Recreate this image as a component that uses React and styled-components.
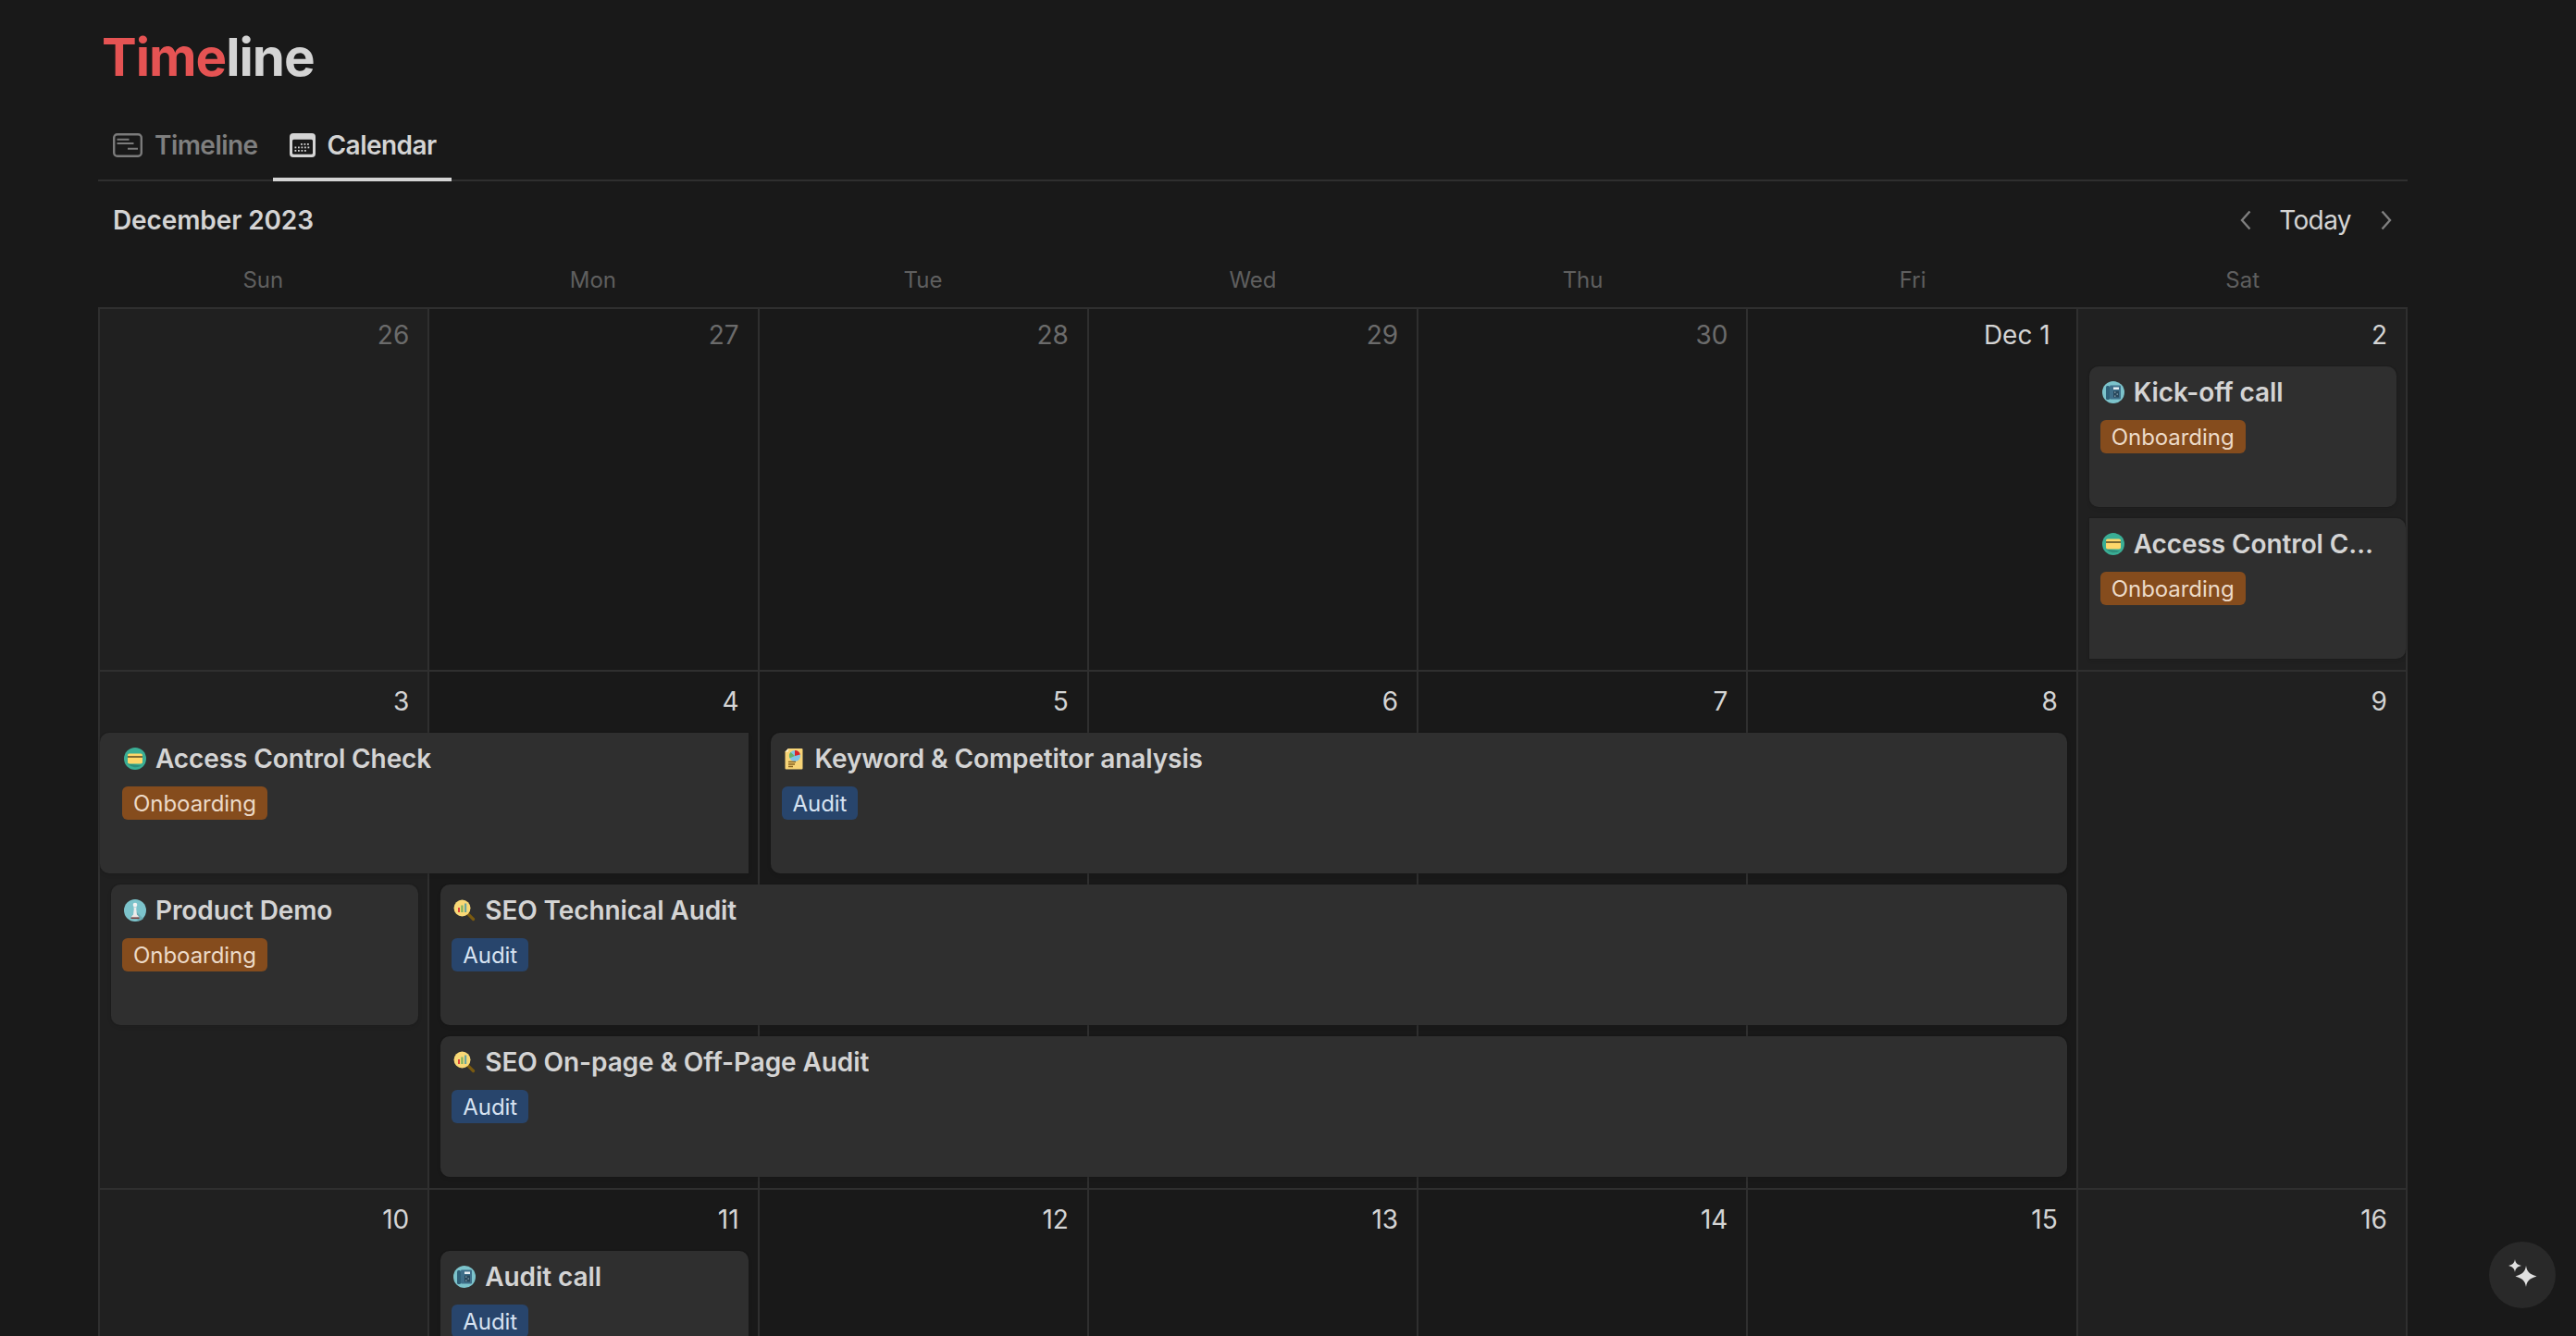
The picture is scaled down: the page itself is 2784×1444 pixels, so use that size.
import React from "react";
import styled, { createGlobalStyle } from "styled-components";

const Global = createGlobalStyle`
  html, body { margin: 0; padding: 0; background: #191919; height: 100%; overflow: hidden; }
  body { font-family: Inter, "Noto Sans", "Liberation Sans", sans-serif; color: #d4d4d4; -webkit-font-smoothing: antialiased; }
`;

const Page = styled.div`
  width: 2496px;
  margin-left: 106px;
  height: 1444px;
  overflow: hidden;
`;
const Title = styled.h1`
  margin: 0;
  padding: 26px 0 0 4px;
  height: 112px;
  box-sizing: border-box;
  font-size: 56.5px;
  line-height: 72px;
  font-weight: 700;
  letter-spacing: -1px;
  color: #d4d4d4;
`;
const TitleAccent = styled.span`
  color: #e55353;
`;
const TabBar = styled.nav`
  display: flex;
  height: 84px;
  box-sizing: border-box;
  border-bottom: 2px solid #2f2f2f;
`;
const Tab = styled.div`
  display: flex;
  align-items: center;
  gap: 13px;
  height: 84px;
  box-sizing: border-box;
  padding: 9px ${(p) => (p.$active ? "16px" : "16px")} 0 ${(p) => (p.$active ? "18px" : "16px")};
  font-size: 28px;
  font-weight: 600;
  letter-spacing: -0.55px;
  color: ${(p) => (p.$active ? "#d4d4d4" : "#7f7f7f")};
  border-bottom: 4px solid ${(p) => (p.$active ? "#d4d4d4" : "transparent")};
`;
const MonthBar = styled.div`
  display: flex;
  align-items: center;
  justify-content: space-between;
  height: 84px;
  padding: 0 16px 0 16px;
  box-sizing: border-box;
`;
const MonthLabel = styled.div`
  font-size: 28px;
  font-weight: 600;
  letter-spacing: -0.1px;
  color: #d4d4d4;
`;
const Nav = styled.div`
  display: flex;
  align-items: center;
`;
const NavButton = styled.div`
  display: flex;
  width: 14px;
  justify-content: center;
`;
const TodayLabel = styled.div`
  font-size: 28px;
  font-weight: 400;
  letter-spacing: -0.6px;
  color: #d4d4d4;
  margin: 0 31px 0 29px;
`;
const WeekdayRow = styled.div`
  display: grid;
  grid-template-columns: repeat(7, 1fr);
  height: 52px;
`;
const Weekday = styled.div`
  text-align: center;
  font-size: 24px;
  line-height: 46px;
  color: #5f5f5f;
`;
const Week = styled.section`
  display: grid;
  grid-template-columns: repeat(7, 1fr);
  grid-template-rows: ${(p) => p.$head}px repeat(${(p) => p.$rows}, 152px) 0;
  row-gap: 12px;
  border-top: 2px solid #2f2f2f;
  border-right: 2px solid #2f2f2f;
`;
const Day = styled.div`
  grid-row: 1 / -1;
  grid-column: ${(p) => p.$col};
  box-sizing: border-box;
  padding: ${(p) => p.$pad}px ${(p) => (p.$monthStart ? "28px" : "20px")} 0 0;
  text-align: right;
  font-size: 28px;
  line-height: 36px;
  color: ${(p) => (p.$muted ? "#6b6b6b" : "#d4d4d4")};
  background: ${(p) => (p.$col === 1 || p.$col === 7 ? "#202020" : "#191919")};
  border-left: 2px solid #2f2f2f;
`;
const Card = styled.article`
  grid-column: ${(p) => p.$col} / span ${(p) => p.$span};
  grid-row: ${(p) => p.$row + 1};
  min-width: 0;
  box-sizing: border-box;
  margin-left: ${(p) => (p.$flushLeft ? "2px" : "14px")};
  margin-right: ${(p) => (p.$flushRight ? "0" : "10px")};
  padding: 8px ${(p) => (p.$flushRight ? "26px" : "12px")} 0 ${(p) => (p.$flushLeft ? "24px" : "12px")};
  background: #2f2f2f;
  border-radius: ${(p) => (p.$flushRight ? "0 10px 10px 0" : p.$flushLeft ? "10px 0 0 10px" : "10px")};
  box-shadow: 0 0 0 1px rgba(15, 15, 15, 0.1), 0 2px 4px rgba(15, 15, 15, 0.1);
`;
const CardTitle = styled.div`
  display: flex;
  align-items: center;
  gap: 10px;
  height: 40px;
  font-size: 28px;
  font-weight: 600;
  letter-spacing: -0.1px;
  color: #d4d4d4;
`;
const CardName = styled.span`
  min-width: 0;
  white-space: nowrap;
  overflow: hidden;
  text-overflow: ellipsis;
`;
const Emoji = styled.svg`
  flex: none;
  width: 24px;
  height: 24px;
  margin-left: 2px;
`;
const Tag = styled.span`
  display: inline-block;
  margin-top: 10px;
  height: 36px;
  line-height: 38px;
  padding: 0 12px;
  border-radius: 6px;
  font-size: 24px;
  letter-spacing: -0.05px;
  background: ${(p) => (p.$kind === "Audit" ? "#28456c" : "#854c1d")};
  color: ${(p) => (p.$kind === "Audit" ? "#d6e2f1" : "#ecdac8")};
`;
const Assistant = styled.button`
  position: fixed;
  right: 22px;
  bottom: 30px;
  width: 72px;
  height: 72px;
  padding: 0;
  border: 0;
  border-radius: 50%;
  background: #292929;
  display: flex;
  align-items: center;
  justify-content: center;
`;

const PhoneIcon = () => (
  <Emoji viewBox="0 0 24 24">
    <circle cx="12" cy="12" r="12" fill="#7cc3cb" />
    <rect x="4" y="5" width="4" height="15" rx="1.500" fill="#2f6078" />
    <rect x="8" y="4.500" width="12" height="15" rx="1" fill="#3f6f8a" />
    <rect x="12" y="6.500" width="6" height="2.500" fill="#e6eef2" />
    <rect x="12" y="10.500" width="6" height="7" fill="#28485c" />
    <rect x="13" y="11.500" width="1.500" height="1.200" fill="#8fa8b5" />
    <rect x="15.500" y="13.500" width="1.500" height="1.200" fill="#8fa8b5" />
    <rect x="13" y="15.500" width="1.500" height="1.200" fill="#8fa8b5" />
  </Emoji>
);
const CardIcon = () => (
  <Emoji viewBox="0 0 24 24">
    <circle cx="12" cy="12" r="12" fill="#3aae95" />
    <path d="M4 17.500 19 19.500a12 12 0 0 1-15-2z" fill="#2f8f7c" />
    <rect x="4" y="6.500" width="16" height="11" rx="1.800" fill="#ffd76a" />
    <rect x="4" y="9" width="16" height="2" fill="#7d6a33" />
  </Emoji>
);
const PawnIcon = () => (
  <Emoji viewBox="0 0 24 24">
    <circle cx="12" cy="12" r="12" fill="#7cc3cb" />
    <path d="M12 12l9 9a12 12 0 0 1-6 2.600z" fill="#6aabb3" />
    <circle cx="12" cy="6" r="2.300" fill="#f2f2f2" />
    <path d="M10.200 8.500h3.600l-.6 1.500.8 7h-4l.8-7z" fill="#ececec" />
    <path d="M7.500 19.500 9.500 17h5l2 2.500z" fill="#f0e6e4" />
    <rect x="7.500" y="19.500" width="9" height="1.600" fill="#7b3b3b" />
  </Emoji>
);
const MagnifierIcon = () => (
  <Emoji viewBox="0 0 24 24">
    <path d="M14.500 14.500 21.500 21.500" stroke="#7a5a10" strokeWidth="3.200" strokeLinecap="round" />
    <circle cx="9.500" cy="9.500" r="9" fill="#f9d976" />
    <rect x="5" y="9" width="2" height="5" fill="#e0443a" />
    <rect x="8.300" y="6.500" width="2.200" height="7.500" fill="#7fb25d" />
    <rect x="12" y="4.500" width="2.200" height="9.500" fill="#6aa6a0" />
  </Emoji>
);
const DocIcon = () => (
  <Emoji viewBox="0 0 24 24">
    <path d="M5 1h14.500a1 1 0 0 1 1 1v20.500a1 1 0 0 1-1 1H2.500a1 1 0 0 1-1-1V4.500z" fill="#f7d477" />
    <path d="M1.500 4.500 5 1v3.500z" fill="#fff3cf" />
    <circle cx="12" cy="9" r="6" fill="#80c3e8" />
    <path d="M12 9V3a6 6 0 0 1 5.800 4.500z" fill="#d8232a" />
    <path d="M12 9 7.500 5a6 6 0 0 0-1 6.500z" fill="#67b26a" />
    <path d="M5 15.500h8M5 18h7M5 20.500h5" stroke="#8a6420" strokeWidth="1.300" />
  </Emoji>
);
const icons = { phone: PhoneIcon, card: CardIcon, pawn: PawnIcon, magnifier: MagnifierIcon, doc: DocIcon };

const TimelineTabIcon = () => (
  <svg width="32" height="26" viewBox="0 0 32 26" fill="none" stroke="#7b7b7b" strokeWidth="2">
    <rect x="1.200" y="1.200" width="29.600" height="23.600" rx="3.500" strokeWidth="2.400" />
    <path d="M4.500 6.700h13M4.500 11h18M16 16.700h11" />
  </svg>
);
const dots = [
  [12, 11], [15.5, 11], [19, 11],
  [5.5, 14.5], [9, 14.5], [12.5, 14.5], [16, 14.5], [19.5, 14.5],
  [5.5, 18], [9, 18], [12.5, 18], [16, 18],
];
const CalendarTabIcon = () => (
  <svg width="28" height="26" viewBox="0 0 28 26">
    <rect x="0" y="0" width="28" height="26" rx="4" fill="#d4d4d4" />
    <rect x="3" y="6.700" width="22" height="16" rx="1.500" fill="#191919" />
    {dots.map(([x, y]) => (
      <rect key={`${x}-${y}`} x={x} y={y} width="1.800" height="1.800" fill="#d4d4d4" />
    ))}
  </svg>
);
const Chevron = ({ d }) => (
  <svg width="14" height="22" viewBox="0 0 14 22" fill="none" stroke="#7f7f7f" strokeWidth="2.400">
    <path d={d} />
  </svg>
);
const Sparkles = () => (
  <svg width="36" height="36" viewBox="0 0 36 36" fill="#e0e0e0">
    <path d="M10 1c.6 4 2.600 6 7 7-4.400 1-6.400 3-7 7-.6-4-2.600-6-7-7 4.400-1 6.400-3 7-7z" />
    <path d="M22 8c1 6.400 3.400 9 11.500 11.500C25.400 22 23 24.600 22 31c-1-6.400-3.400-9-11.500-11.500C18.600 17 21 14.400 22 8z" />
  </svg>
);

const weekdays = ["Sun", "Mon", "Tue", "Wed", "Thu", "Fri", "Sat"];
const weeks = [
  {
    head: 50,
    pad: 10,
    rows: 2,
    days: [
      { t: "26", muted: true }, { t: "27", muted: true }, { t: "28", muted: true }, { t: "29", muted: true },
      { t: "30", muted: true }, { t: "Dec 1", monthStart: true }, { t: "2" },
    ],
    events: [
      { name: "Kick-off call", icon: "phone", tag: "Onboarding", col: 7, span: 1, row: 1 },
      { name: "Access Control Check", icon: "card", tag: "Onboarding", col: 7, span: 1, row: 2, flushRight: true },
    ],
  },
  {
    head: 54,
    pad: 14,
    rows: 3,
    days: ["3", "4", "5", "6", "7", "8", "9"].map((t) => ({ t })),
    events: [
      { name: "Access Control Check", icon: "card", tag: "Onboarding", col: 1, span: 2, row: 1, flushLeft: true },
      { name: "Keyword & Competitor analysis", icon: "doc", tag: "Audit", col: 3, span: 4, row: 1 },
      { name: "Product Demo", icon: "pawn", tag: "Onboarding", col: 1, span: 1, row: 2 },
      { name: "SEO Technical Audit", icon: "magnifier", tag: "Audit", col: 2, span: 5, row: 2 },
      { name: "SEO On-page & Off-Page Audit", icon: "magnifier", tag: "Audit", col: 2, span: 5, row: 3 },
    ],
  },
  {
    head: 54,
    pad: 14,
    rows: 1,
    days: ["10", "11", "12", "13", "14", "15", "16"].map((t) => ({ t })),
    events: [{ name: "Audit call", icon: "phone", tag: "Audit", col: 2, span: 1, row: 1 }],
  },
];

export default function App() {
  return (
    <Page>
      <Global />
      <Title>
        <TitleAccent>Time</TitleAccent>line
      </Title>
      <TabBar>
        <Tab>
          <TimelineTabIcon />
          Timeline
        </Tab>
        <Tab $active>
          <CalendarTabIcon />
          Calendar
        </Tab>
      </TabBar>
      <MonthBar>
        <MonthLabel>December 2023</MonthLabel>
        <Nav>
          <NavButton>
            <Chevron d="M11.500 1.500 3 11l8.500 9.500" />
          </NavButton>
          <TodayLabel>Today</TodayLabel>
          <NavButton>
            <Chevron d="M2.500 1.500 11 11l-8.500 9.500" />
          </NavButton>
        </Nav>
      </MonthBar>
      <WeekdayRow>
        {weekdays.map((d) => (
          <Weekday key={d}>{d}</Weekday>
        ))}
      </WeekdayRow>
      {weeks.map((w, i) => (
        <Week key={i} $head={w.head} $rows={w.rows}>
          {w.days.map((d, j) => (
            <Day key={d.t} $col={j + 1} $pad={w.pad} $muted={d.muted} $monthStart={d.monthStart}>
              {d.t}
            </Day>
          ))}
          {w.events.map((e) => {
            const Icon = icons[e.icon];
            return (
              <Card key={e.name + e.row} $col={e.col} $span={e.span} $row={e.row} $flushLeft={e.flushLeft} $flushRight={e.flushRight}>
                <CardTitle>
                  <Icon />
                  <CardName>{e.name}</CardName>
                </CardTitle>
                <Tag $kind={e.tag}>{e.tag}</Tag>
              </Card>
            );
          })}
        </Week>
      ))}
      <Assistant>
        <Sparkles />
      </Assistant>
    </Page>
  );
}
